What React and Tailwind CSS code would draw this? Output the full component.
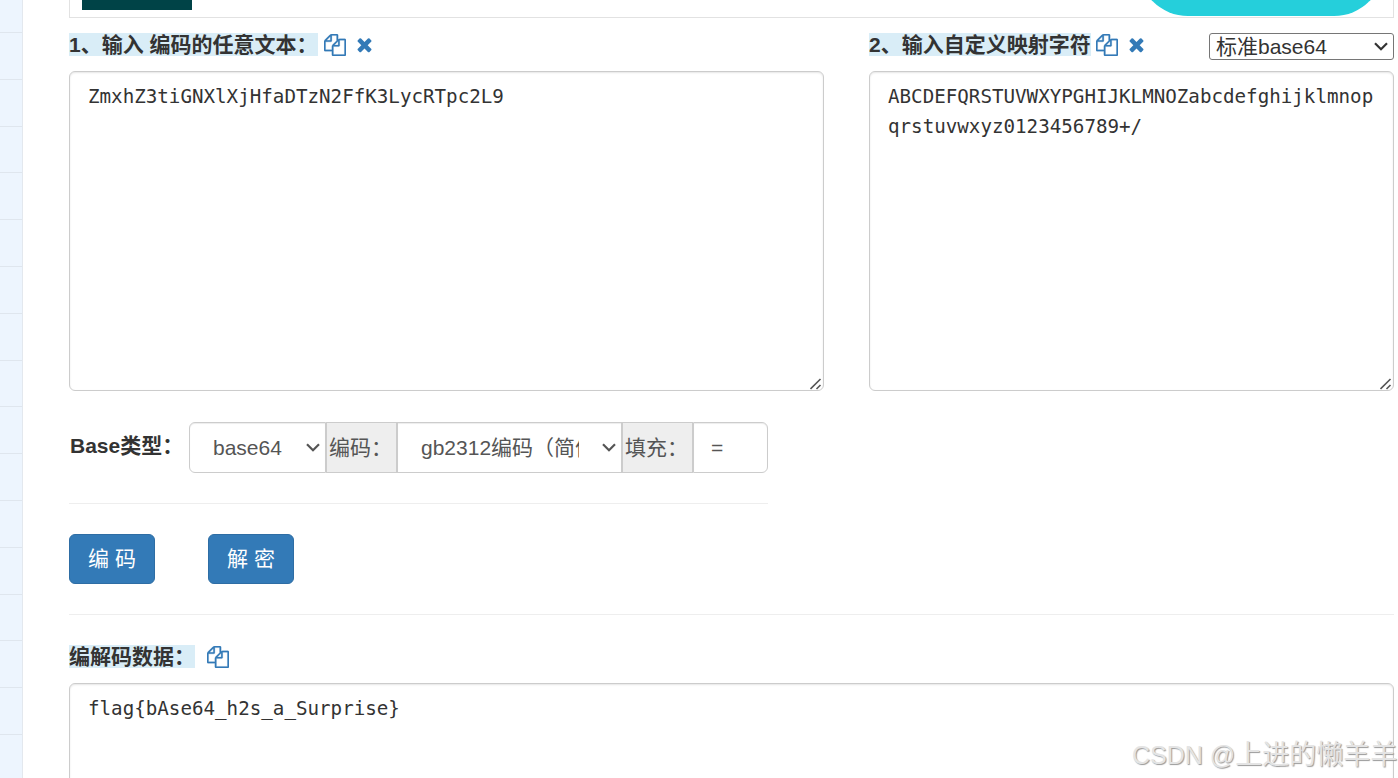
import { useState } from "react";

const BASE_INPUT = "ZmxhZ3tiGNXlXjHfaDTzN2FfK3LycRTpc2L9";
const CUSTOM_MAP = "ABCDEFQRSTUVWXYPGHIJKLMNOZabcdefghijklmnopqrstuvwxyz0123456789+/";

const sideRows = Array.from({ length: 16 }, (_, i) => i);

function CopyIcon() {
  return (
    <svg viewBox="0 0 1792 1792" className="w-[22px] h-[22px] shrink-0 fill-[#337ab7] stroke-[#337ab7] stroke-[20]">
      <path d="M1696 384q40 0 68 28t28 68v1216q0 40-28 68t-68 28h-960q-40 0-68-28t-28-68v-288h-544q-40 0-68-28t-28-68v-672q0-40 20-88t48-76l408-408q28-28 76-48t88-20h416q40 0 68 28t28 68v328q68-40 128-40h416zm-544 213l-299 299h299v-299zm-640-384l-299 299h299v-299zm196 647l316-316v-416h-384v416q0 40-28 68t-68 28h-416v640h512v-256q0-40 20-88t48-76zm956 804v-1152h-384v416q0 40-28 68t-68 28h-416v640h896z" />
    </svg>
  );
}

function RemoveIcon() {
  return (
    <svg viewBox="0 0 1792 1792" className="w-[21px] h-[21px] shrink-0 fill-[#337ab7]">
      <path d="M1490 1322q0 40-28 68l-136 136q-28 28-68 28t-68-28l-294-294-294 294q-28 28-68 28t-68-28l-136-136q-28-28-28-68t28-68l294-294-294-294q-28-28-28-68t28-68l136-136q28-28 68-28t68 28l294 294 294-294q28-28 68-28t68 28l136 136q28 28 28 68t-28 68l-294 294 294 294q28 28 28 68z" />
    </svg>
  );
}

function Chevron() {
  return (
    <svg viewBox="0 0 14 9" className="w-[14px] h-[9px] shrink-0" fill="none" stroke="currentColor" strokeWidth="2.2">
      <path d="M1 1.2l6 6 6-6" />
    </svg>
  );
}

function Label({ children }) {
  return (
    <span className="h-[23px] leading-[24px] bg-[#d9edf7] font-bold whitespace-pre">{children}</span>
  );
}

function TextBox({ value, onChange, className }) {
  return (
    <div className={`relative ${className}`}>
      <textarea
        value={value}
        onChange={(e) => onChange(e.target.value)}
        spellCheck={false}
        className="block w-full h-full resize-none overflow-hidden outline-none border border-[#ccc] rounded-md pl-[18px] pr-3 pt-[10px] font-['DejaVu_Sans_Mono',monospace] text-[19.2px] leading-[30px] text-[#333] break-all shadow-[inset_0_1px_2px_rgba(0,0,0,0.1)]"
      />
      <svg viewBox="0 0 12 12" className="absolute right-[2px] bottom-[1px] w-3 h-3" stroke="#555" strokeWidth="1.6">
        <path d="M0.5 11L10.5 1M6.5 11L10.5 7" />
      </svg>
    </div>
  );
}

export default function App() {
  const [text, setText] = useState(BASE_INPUT);
  const [map, setMap] = useState(CUSTOM_MAP);
  const [result, setResult] = useState("flag{bAse64_h2s_a_Surprise}");

  return (
    <div className="relative flex w-full h-[778px] overflow-hidden bg-white text-[#333] text-[21px] leading-[30px] font-['Liberation_Sans','Noto_Sans_CJK_SC',sans-serif]">
      {/* Side strip */}
      <div className="w-[23px] shrink-0 h-full overflow-hidden bg-[#edf5fe] border-r border-[#e3e8ee]">
        <div className="h-[33px] border-b border-[#dfe6ee]" />
        {sideRows.map((row) => (
          <div key={row} className="h-[46.8px] border-b border-[#dfe6ee]" />
        ))}
      </div>

      <div className="flex flex-col w-[1325px] ml-[46px] shrink-0">
        {/* Banner */}
        <div className="flex justify-between items-end h-[18px] shrink-0 border border-t-0 border-[#e2e2e2] pl-3 pr-[9px]">
          <div className="w-[110px] h-[10px] mb-[7px] bg-[#004347]" />
          <div className="flex flex-col justify-end w-[246px] h-4 mb-px overflow-hidden">
            <div className="h-[100px] shrink-0 rounded-full bg-[#25cfdb]" />
          </div>
        </div>

        {/* Input and mapping */}
        <div className="flex justify-between mt-[15px]">
          <div className="w-[755px]">
            <div className="flex items-start h-[38px]">
              <Label>1、输入 编码的任意文本：</Label>
              <div className="flex ml-[6px] pt-px gap-2">
                <CopyIcon />
                <RemoveIcon />
              </div>
            </div>
            <TextBox value={text} onChange={setText} className="h-[320px]" />

            <div className="flex mt-[31px] h-[51px]">
              <span className="w-[120px] shrink-0 pt-[9px] pl-px font-bold">Base类型：</span>
              <div className="flex w-[579px] text-[#555] leading-[49px]">
                <div className="flex items-center justify-between w-[137px] border border-[#ccc] rounded-l-md pl-[23px] pr-[5px] shadow-[inset_0_1px_1px_rgba(0,0,0,0.075)]">
                  <span>base64</span>
                  <Chevron />
                </div>
                <span className="w-[71px] border border-[#ccc] bg-[#eee] pl-[2px] whitespace-nowrap">编码：</span>
                <div className="flex items-center justify-between w-[225px] border border-[#ccc] pl-[23px] pr-[5px] shadow-[inset_0_1px_1px_rgba(0,0,0,0.075)]">
                  <span className="w-[158px] overflow-hidden whitespace-nowrap">gb2312编码（简体</span>
                  <Chevron />
                </div>
                <span className="w-[71px] border border-[#ccc] bg-[#eee] pl-[2px] whitespace-nowrap">填充：</span>
                <div className="w-[75px] border border-[#ccc] rounded-r-md pl-[17px] shadow-[inset_0_1px_1px_rgba(0,0,0,0.075)]">=</div>
              </div>
            </div>
            <hr className="w-[699px] mt-[30px] border-[#eee]" />
          </div>

          <div className="w-[525px]">
            <div className="flex items-start h-[38px]">
              <Label>2、输入自定义映射字符</Label>
              <div className="flex ml-[5px] pt-px gap-2">
                <CopyIcon />
                <RemoveIcon />
              </div>
              <div className="flex items-center justify-between w-[185px] h-[27px] ml-auto border border-[#767676] rounded-[3px] pl-[6px] pr-[5px]">
                <span>标准base64</span>
                <Chevron />
              </div>
            </div>
            <TextBox value={map} onChange={setMap} className="h-[320px]" />
          </div>
        </div>

        {/* Actions */}
        <div className="flex gap-[53px] mt-[30px]">
          <button className="w-[86px] h-[50px] rounded-md border border-[#2e6da4] bg-[#337ab7] text-white">编 码</button>
          <button className="w-[86px] h-[50px] rounded-md border border-[#2e6da4] bg-[#337ab7] text-white">解 密</button>
        </div>
        <hr className="mt-[30px] border-[#eee]" />

        {/* Result */}
        <div className="flex items-start h-[38px] mt-[30px] shrink-0">
          <Label>编解码数据：</Label>
          <div className="ml-3 pt-px">
            <CopyIcon />
          </div>
        </div>
        <TextBox value={result} onChange={setResult} className="h-[320px] shrink-0" />
      </div>

      <div className="absolute left-[1132px] top-[735px] flex items-baseline whitespace-pre text-[25px] leading-[40px] text-[#e4e4e4] [text-shadow:1px_1px_1px_#999]">
        <span>CSDN @</span>
        <span className="text-[27px]">上进的懒羊羊</span>
      </div>
    </div>
  );
}
